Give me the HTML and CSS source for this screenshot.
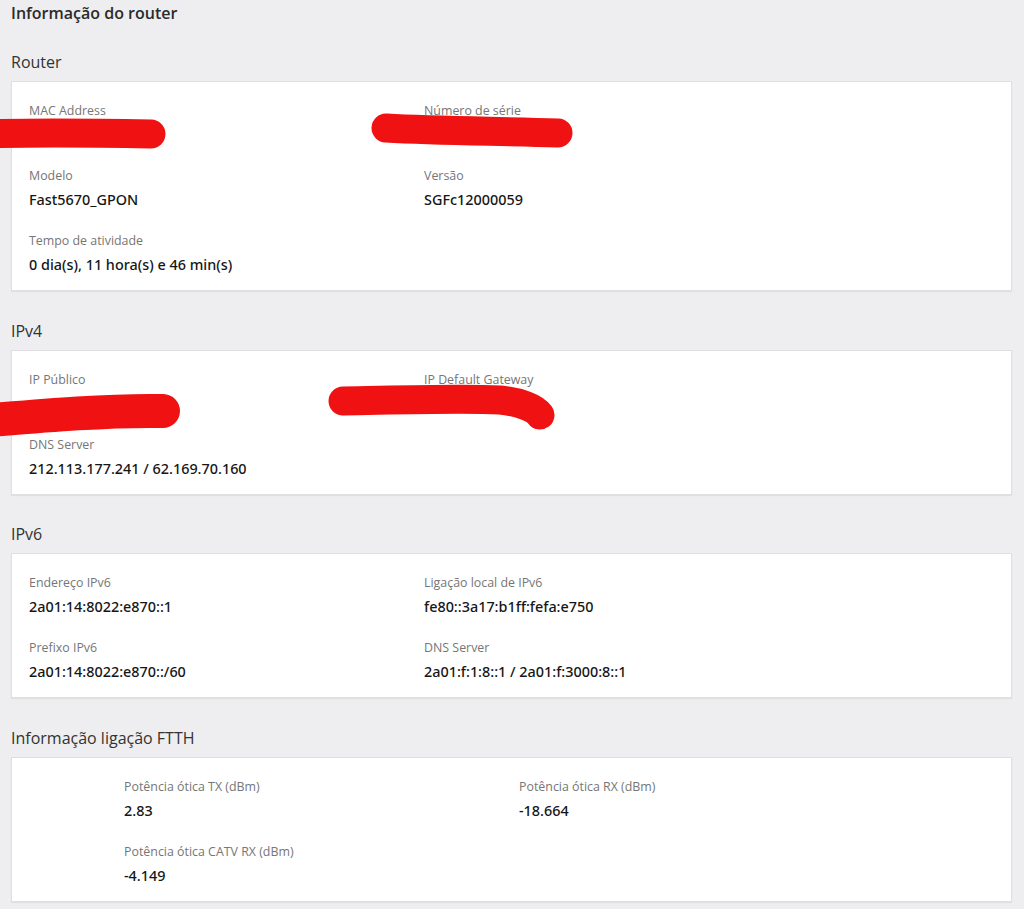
FILE: index.html
```html
<!DOCTYPE html>
<html lang="pt">
<head>
<meta charset="utf-8">
<title>Informação do router</title>
<link rel="stylesheet" href="styles.css">
</head>
<body>
<main class="page">
  <h1 class="page-title">Informação do router</h1>

  <section class="section">
    <h2 class="section-title">Router</h2>
    <div class="card">
      <div class="fields">
        <div class="field"><div class="field-label">MAC Address</div><div class="field-value">&nbsp;</div></div>
        <div class="field"><div class="field-label">Número de série</div><div class="field-value">&nbsp;</div></div>
        <div class="field"><div class="field-label">Modelo</div><div class="field-value">Fast5670_GPON</div></div>
        <div class="field"><div class="field-label">Versão</div><div class="field-value">SGFc12000059</div></div>
        <div class="field"><div class="field-label">Tempo de atividade</div><div class="field-value">0 dia(s), 11 hora(s) e 46 min(s)</div></div>
      </div>
    </div>
  </section>

  <section class="section">
    <h2 class="section-title">IPv4</h2>
    <div class="card">
      <div class="fields">
        <div class="field"><div class="field-label">IP Público</div><div class="field-value">&nbsp;</div></div>
        <div class="field"><div class="field-label">IP Default Gateway</div><div class="field-value">&nbsp;</div></div>
        <div class="field"><div class="field-label">DNS Server</div><div class="field-value">212.113.177.241 / 62.169.70.160</div></div>
      </div>
    </div>
  </section>

  <section class="section">
    <h2 class="section-title">IPv6</h2>
    <div class="card">
      <div class="fields">
        <div class="field"><div class="field-label">Endereço IPv6</div><div class="field-value">2a01:14:8022:e870::1</div></div>
        <div class="field"><div class="field-label">Ligação local de IPv6</div><div class="field-value">fe80::3a17:b1ff:fefa:e750</div></div>
        <div class="field"><div class="field-label">Prefixo IPv6</div><div class="field-value">2a01:14:8022:e870::/60</div></div>
        <div class="field"><div class="field-label">DNS Server</div><div class="field-value">2a01:f:1:8::1 / 2a01:f:3000:8::1</div></div>
      </div>
    </div>
  </section>

  <section class="section">
    <h2 class="section-title">Informação ligação FTTH</h2>
    <div class="card card-indented">
      <div class="fields">
        <div class="field"><div class="field-label">Potência ótica TX (dBm)</div><div class="field-value">2.83</div></div>
        <div class="field"><div class="field-label">Potência ótica RX (dBm)</div><div class="field-value">-18.664</div></div>
        <div class="field"><div class="field-label">Potência ótica CATV RX (dBm)</div><div class="field-value">-4.149</div></div>
      </div>
    </div>
  </section>
</main>

<!-- hand-drawn marker strokes hiding private values -->
<svg class="marker" width="1024" height="909" viewBox="0 0 1024 909" aria-hidden="true">
  <g fill="none" stroke="#f01212" stroke-linecap="round" stroke-linejoin="round">
    <path d="M -20 134 C 40 132, 100 133, 151 134" stroke-width="29"/>
    <path d="M 386 128 C 440 131, 500 131, 558 133" stroke-width="29"/>
    <path d="M -20 421 C 50 415, 110 410, 163 411" stroke-width="34"/>
    <path d="M 343 401 C 400 400, 460 398, 500 400 C 520 402, 535 408, 540 415" stroke-width="29"/>
  </g>
</svg>
</body>
</html>
```

FILE: styles.css
```css
html, body {
  margin: 0;
  padding: 0;
}

body {
  background: #eeeef0;
  font-family: "Open Sans", "Liberation Sans", sans-serif;
  color: #222;
  width: 1024px;
  height: 909px;
  overflow: hidden;
  position: relative;
}

.page {
  padding: 2px 12px 0 11px;
}

.page-title {
  margin: 0;
  font-size: 16px;
  line-height: 22px;
  font-weight: 600;
  color: #2b2b2b;
}

.section {
  margin-top: 27px;
}

.section + .section {
  margin-top: 28.7px;
}

.section-title {
  margin: 0 0 8px;
  font-size: 16px;
  line-height: 22px;
  font-weight: 400;
  color: #333;
}

.card {
  background: #fff;
  border: 1px solid #dfdfe2;
  box-shadow: 0 1px 1px rgba(0, 0, 0, 0.06);
  padding: 20px 17px 15px;
}

.card-indented {
  padding-left: 112px;
}

.fields {
  display: grid;
  grid-template-columns: 395px 395px;
  row-gap: 22px;
}

.field-label {
  font-size: 12.4px;
  line-height: 18px;
  color: #767676;
  margin-bottom: 5px;
}

.field-value {
  font-family: "Noto Sans", "Open Sans", sans-serif;
  font-size: 14.4px;
  line-height: 20px;
  font-weight: 500;
  color: #161616;
}

.marker {
  position: absolute;
  left: 0;
  top: 0;
  pointer-events: none;
}
```
